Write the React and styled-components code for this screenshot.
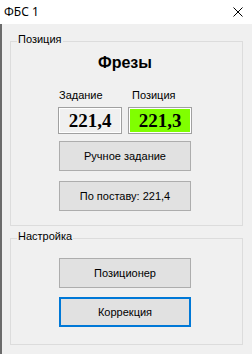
import React from "react";
import styled, { createGlobalStyle } from "styled-components";

const GlobalStyle = createGlobalStyle`
  html, body { margin: 0; padding: 0; }
  body {
    width: 252px;
    height: 354px;
    overflow: hidden;
    background: #f0f0f0;
    font-family: "Liberation Sans", Arial, sans-serif;
  }
  * { box-sizing: border-box; }
`;

const Window = styled.div`
  display: flex;
  flex-direction: column;
  width: 252px;
  height: 354px;
`;

const TitleBar = styled.div`
  height: 24px;
  flex: none;
  background: #ffffff;
  display: flex;
  align-items: center;
  justify-content: space-between;
  padding: 0 9px 0 4px;
`;

const Title = styled.span`
  font-family: "Noto Sans", "Liberation Sans", sans-serif;
  font-size: 12px;
  color: #000;
  line-height: 16px;
`;

const Body = styled.div`
  flex: 1;
  border-left: 2px solid #6b6b6b;
  padding: 9px 9px 0 8px;
  display: flex;
  flex-direction: column;
  gap: 4px;
`;

const Group = styled.fieldset`
  margin: 0;
  padding: 0;
  width: 233px;
  min-width: 0;
  border: 1px solid #dcdcdc;
`;

const Legend = styled.legend`
  margin-left: 6px;
  padding: 0 1px 4px;
  font-size: 11px;
  line-height: 13px;
  color: #000;
`;

const GroupContent = styled.div`
  padding: ${(p) => p.$pt}px 0 ${(p) => p.$pb}px 48px;
  display: flex;
  flex-direction: column;
  align-items: flex-start;
  width: 180px;
`;

const Heading = styled.div`
  width: 132px;
  text-align: center;
  font-size: 16px;
  line-height: 20px;
  font-weight: bold;
  color: #000;
  margin-bottom: 16px;
`;

const ValueGrid = styled.div`
  display: grid;
  grid-template-columns: 64px 64px;
  column-gap: 6px;
  row-gap: 5px;
  margin-left: -1px;
`;

const ValueLabel = styled.div`
  font-size: 11px;
  line-height: 13px;
  color: #000;
  padding-left: ${(p) => p.$indent}px;
`;

const ValueBox = styled.div`
  height: 27px;
  border: 1px solid #a0a0a0;
  box-shadow: inset 0 0 0 1px #ffffff;
  background: ${(p) => p.$bg};
  display: flex;
  align-items: center;
  justify-content: center;
  font-family: "Liberation Serif", "Times New Roman", serif;
  font-weight: bold;
  font-size: 19px;
  line-height: 20px;
  color: #000;
`;

const Button = styled.button`
  width: 132px;
  height: 30px;
  margin: ${(p) => p.$mt}px 0 0;
  padding: 0;
  background: #e1e1e1;
  border: ${(p) => (p.$focused ? "2px solid #0078d7" : "1px solid #adadad")};
  font-family: "Liberation Sans", Arial, sans-serif;
  font-size: 11px;
  color: #000;
  outline: none;
`;

function CloseIcon() {
  return (
    <svg width="10" height="10" viewBox="0 0 10 10">
      <path d="M0.5 0.5 L9.5 9.5 M9.5 0.5 L0.5 9.5" stroke="#000" strokeWidth="1" fill="none" />
    </svg>
  );
}

export default function App() {
  return (
    <>
      <GlobalStyle />
      <Window>
        <TitleBar>
          <Title>ФБС 1</Title>
          <CloseIcon />
        </TitleBar>
        <Body>
          <Group>
            <Legend>Позиция</Legend>
            <GroupContent $pt={3} $pb={14}>
              <Heading>Фрезы</Heading>
              <ValueGrid>
                <ValueLabel $indent={1}>Задание</ValueLabel>
                <ValueLabel $indent={4}>Позиция</ValueLabel>
                <ValueBox $bg="#f0f0f0">221,4</ValueBox>
                <ValueBox $bg="#80ff00">221,3</ValueBox>
              </ValueGrid>
              <Button $mt={7}>Ручное задание</Button>
              <Button $mt={10}>По поставу: 221,4</Button>
            </GroupContent>
          </Group>
          <Group>
            <Legend>Настройка</Legend>
            <GroupContent $pt={11} $pb={17}>
              <Button $mt={0}>Позиционер</Button>
              <Button $mt={9} $focused>Коррекция</Button>
            </GroupContent>
          </Group>
        </Body>
      </Window>
    </>
  );
}
